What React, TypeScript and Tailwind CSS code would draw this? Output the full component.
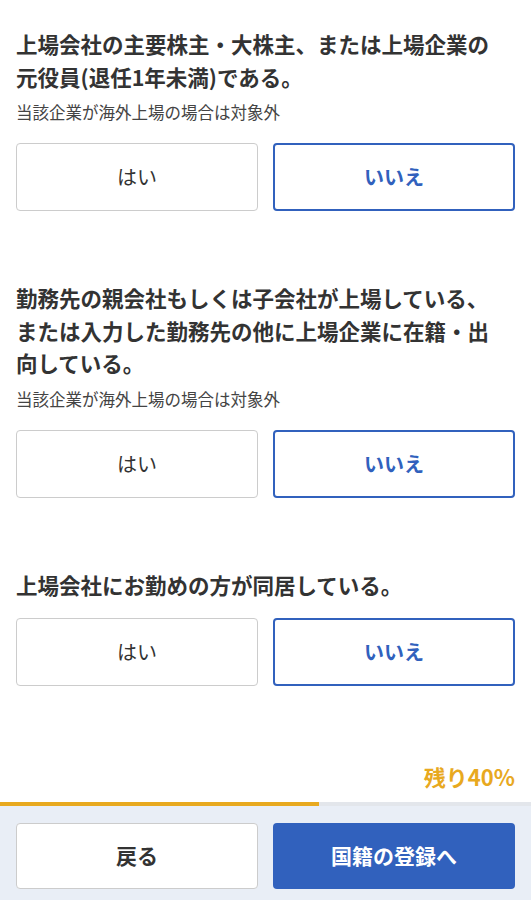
import React from "react";

const font = { fontFamily: '"Noto Sans CJK JP", "Noto Sans", sans-serif' };

const ChoiceRow = () => (
  <div className="grid grid-cols-2 gap-[15px]">
    <button className="h-[68px] rounded-[4px] border border-[#cccccc] bg-white text-[20px] text-[#333333]">
      はい
    </button>
    <button className="h-[68px] rounded-[4px] border-2 border-[#3161bd] bg-white text-[20px] font-bold text-[#3161bd]">
      いいえ
    </button>
  </div>
);

const Question = ({
  title,
  note,
  className = "",
}: {
  title: string;
  note?: string;
  className?: string;
}) => (
  <section className={className}>
    <h2 className="pr-[20px] text-[21.5px] font-bold leading-[32.5px] text-[#333333]">
      {title}
    </h2>
    {note && (
      <p className="mt-[7px] text-[16.5px] leading-[24px] text-[#444444]">{note}</p>
    )}
    <div className={note ? "mt-[19px]" : "mt-[17px]"}>
      <ChoiceRow />
    </div>
  </section>
);

export default function App() {
  return (
    <div className="flex min-h-[900px] w-full flex-col bg-white" style={font}>
      <main className="px-4 pt-[28px]">
        <Question
          title="上場会社の主要株主・大株主、または上場企業の元役員(退任1年未満)である。"
          note="当該企業が海外上場の場合は対象外"
        />
        <Question
          className="mt-[71px]"
          title="勤務先の親会社もしくは子会社が上場している、または入力した勤務先の他に上場企業に在籍・出向している。"
          note="当該企業が海外上場の場合は対象外"
        />
        <Question className="mt-[71px]" title="上場会社にお勤めの方が同居している。" />
      </main>

      <div className="mt-auto">
        <p className="px-4 pb-[12px] text-right text-[22px] font-bold leading-[28px] text-[#e8a91f]">
          残り40%
        </p>
        <div className="h-[4px] w-full bg-[#e3e6eb]">
          <div className="h-full w-[60%] bg-[#e8a91f]" />
        </div>
        <footer className="grid grid-cols-2 gap-[15px] bg-[#e9eef6] px-4 pb-[11px] pt-[17px]">
          <button className="h-[66px] rounded-[4px] border border-[#cccccc] bg-white text-[21px] font-bold text-[#333333]">
            戻る
          </button>
          <button className="h-[66px] rounded-[4px] bg-[#3161bd] text-[21px] font-bold text-white">
            国籍の登録へ
          </button>
        </footer>
      </div>
    </div>
  );
}
